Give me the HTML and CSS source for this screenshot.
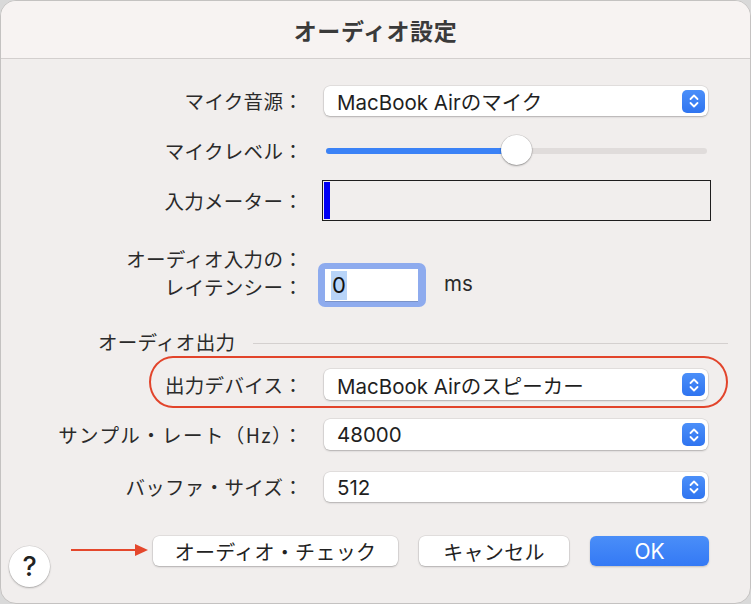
FILE: index.html
```html
<!DOCTYPE html>
<html lang="ja">
<head>
<meta charset="utf-8">
<title>オーディオ設定</title>
<link rel="stylesheet" href="styles.css">
</head>
<body>
<div class="dialog">
  <div class="titlebar">オーディオ設定</div>
  <div class="content">
    <div class="row row-mic">
      <div class="label">マイク音源：</div>
      <div class="select"><span class="select-text">MacBook Airのマイク</span><span class="stepper"><svg width="12" height="16" viewBox="0 0 12 16"><path d="M2.5 6 L6 2.5 L9.5 6 M2.5 10 L6 13.5 L9.5 10" fill="none" stroke="#fff" stroke-width="1.8" stroke-linecap="round" stroke-linejoin="round"/></svg></span></div>
    </div>
    <div class="row row-level">
      <div class="label">マイクレベル：</div>
      <div class="slider"><div class="track"><div class="fill" style="width:50%"></div></div><div class="knob" style="left:50%"></div></div>
    </div>
    <div class="row row-meter">
      <div class="label">入力メーター：</div>
      <div class="meter"><div class="meter-bar"></div></div>
    </div>
    <div class="row row-latency">
      <div class="label label-2">オーディオ入力の：<br>レイテンシー：</div>
      <div class="latency">
        <div class="focus-ring"><div class="input"><span class="sel">0</span></div></div>
        <span class="unit">ms</span>
      </div>
    </div>
    <div class="section">
      <span class="section-title">オーディオ出力</span>
      <span class="section-line"></span>
    </div>
    <div class="row row-out">
      <div class="label">出力デバイス：</div>
      <div class="select"><span class="select-text">MacBook Airのスピーカー</span><span class="stepper"><svg width="12" height="16" viewBox="0 0 12 16"><path d="M2.5 6 L6 2.5 L9.5 6 M2.5 10 L6 13.5 L9.5 10" fill="none" stroke="#fff" stroke-width="1.8" stroke-linecap="round" stroke-linejoin="round"/></svg></span></div>
      <div class="annotation"></div>
    </div>
    <div class="row row-rate">
      <div class="label label-wide">サンプル・レート（Hz）：</div>
      <div class="select"><span class="select-text">48000</span><span class="stepper"><svg width="12" height="16" viewBox="0 0 12 16"><path d="M2.5 6 L6 2.5 L9.5 6 M2.5 10 L6 13.5 L9.5 10" fill="none" stroke="#fff" stroke-width="1.8" stroke-linecap="round" stroke-linejoin="round"/></svg></span></div>
    </div>
    <div class="row row-buf">
      <div class="label">バッファ・サイズ：</div>
      <div class="select"><span class="select-text">512</span><span class="stepper"><svg width="12" height="16" viewBox="0 0 12 16"><path d="M2.5 6 L6 2.5 L9.5 6 M2.5 10 L6 13.5 L9.5 10" fill="none" stroke="#fff" stroke-width="1.8" stroke-linecap="round" stroke-linejoin="round"/></svg></span></div>
    </div>
    <div class="footer">
      <div class="help">?</div>
      <svg class="arrow" width="78" height="14" viewBox="0 0 78 14"><path d="M0 7 L66 7" stroke="#e4472c" stroke-width="2.2"/><path d="M64 1 L77 7 L64 13 Z" fill="#e4472c"/></svg>
      <div class="btn btn-check">オーディオ・チェック</div>
      <div class="btn btn-cancel">キャンセル</div>
      <div class="btn btn-ok">OK</div>
    </div>
  </div>
</div>
</body>
</html>
```
FILE: styles.css
```css
html, body {
  margin: 0;
  padding: 0;
  background: #d9d9d9;
}
body {
  width: 751px;
  height: 604px;
  overflow: hidden;
  font-family: "Inter", "Noto Sans CJK JP", sans-serif;
  color: #262626;
}
.dialog {
  box-sizing: border-box;
  width: 751px;
  height: 604px;
  border: 1px solid #c4c2c1;
  border-radius: 16px;
  background: #f1eeed;
  overflow: hidden;
  display: flex;
  flex-direction: column;
}
.titlebar {
  height: 56px;
  flex: none;
  background: #f7f3f2;
  border-bottom: 1px solid #d3cfce;
  display: flex;
  align-items: center;
  justify-content: center;
  font-family: "Noto Sans CJK JP", sans-serif;
  font-weight: 700;
  font-size: 23px;
  color: #3a3a3a;
  letter-spacing: 0.6px;
  padding-top: 1px;
}
.content {
  flex: 1;
  display: flex;
  flex-direction: column;
  position: relative;
}
.row {
  display: flex;
  align-items: center;
  position: relative;
}
.label {
  width: 302px;
  flex: none;
  text-align: right;
  font-family: "Noto Sans CJK JP", sans-serif;
  font-size: 19.5px;
  letter-spacing: 0.3px;
  line-height: 28px;
  color: #2a2a2a;
}
.label-wide {
  letter-spacing: 1.4px;
  width: 303px;
  margin-right: -1px;
}
.row-mic { margin-top: 27px; height: 30px; }
.row-level { margin-top: 20px; height: 30px; }
.row-meter { margin-top: 14px; height: 41px; }
.row-latency { margin-top: 24px; height: 62px; align-items: flex-start; }
.row-out { margin-top: 16px; height: 31px; }
.row-rate { margin-top: 19px; height: 31px; }
.row-buf { margin-top: 22px; height: 30px; }

.select {
  margin-left: 21px;
  width: 384px;
  height: 100%;
  box-sizing: border-box;
  background: #fff;
  border-radius: 6px;
  box-shadow: 0 0 0 0.5px rgba(0,0,0,0.12), 0 1px 2px rgba(0,0,0,0.22);
  display: flex;
  align-items: center;
  justify-content: space-between;
  padding: 0 3px 0 13px;
}
.select-text {
  font-size: 20.5px;
  color: #1f1f1f;
}
.stepper {
  width: 23px;
  height: 23px;
  border-radius: 5px;
  background: linear-gradient(#4b8ff9, #2f74f0);
  display: flex;
  align-items: center;
  justify-content: center;
}

.slider {
  margin-left: 23px;
  width: 381px;
  height: 30px;
  position: relative;
  display: flex;
  align-items: center;
}
.track {
  width: 100%;
  height: 6px;
  border-radius: 3px;
  background: #e0dcdb;
  overflow: hidden;
  margin-top: -1px;
}
.fill {
  height: 100%;
  background: #3b82f6;
}
.knob {
  position: absolute;
  top: -1px;
  width: 31px;
  height: 30px;
  margin-left: -16px;
  border-radius: 50%;
  background: #fff;
  box-shadow: 0 0 0 0.5px rgba(0,0,0,0.15), 0 1px 2px rgba(0,0,0,0.3);
}

.meter {
  margin-left: 19px;
  width: 389px;
  height: 41px;
  box-sizing: border-box;
  border: 1px solid #1e1e1e;
  padding: 1px;
}
.meter-bar {
  width: 6px;
  height: 100%;
  background: #0000f5;
}

.latency {
  display: flex;
  align-items: center;
  margin-left: 15px;
  margin-top: 18px;
}
.focus-ring {
  box-sizing: border-box;
  width: 108px;
  height: 44px;
  border-radius: 7px;
  background: #8eabee;
  padding: 6px 8px 5px 7px;
}
.input {
  box-sizing: border-box;
  height: 100%;
  background: #fff;
  border-bottom: 1px solid #7a92c8;
  display: flex;
  align-items: center;
  padding-left: 6px;
}
.sel {
  background: #b8d4f8;
  font-size: 22px;
  line-height: 29px;
  color: #111;
  padding: 0 1px;
}
.unit {
  margin-left: 18px;
  font-size: 20.5px;
  color: #2a2a2a;
  margin-top: -3px;
}

.section {
  margin-top: 22px;
  height: 24px;
  display: flex;
  align-items: center;
  padding-left: 97px;
}
.section-title {
  font-family: "Noto Sans CJK JP", sans-serif;
  font-size: 19.5px;
  letter-spacing: 0.3px;
  color: #2a2a2a;
}
.section-line {
  flex: 1;
  height: 1px;
  background: #d4d0cf;
  margin-left: 18px;
  margin-right: 22px;
  margin-top: 5px;
}

.annotation {
  position: absolute;
  left: 148px;
  top: -13px;
  width: 579px;
  height: 52px;
  box-sizing: border-box;
  border: 2px solid #e2442b;
  border-radius: 24px / 26px;
  pointer-events: none;
}

.footer {
  margin-top: 34px;
  height: 30px;
  display: flex;
  align-items: center;
  position: relative;
  padding-left: 152px;
  gap: 21px;
}
.help {
  position: absolute;
  left: 8px;
  top: 10px;
  width: 41px;
  height: 41px;
  border-radius: 50%;
  background: #fff;
  box-shadow: 0 0 0 0.5px rgba(0,0,0,0.12), 0 1px 2px rgba(0,0,0,0.25);
  display: flex;
  align-items: center;
  justify-content: center;
  font-family: "Inter", sans-serif;
  font-size: 27px;
  font-weight: 500;
  color: #222;
}
.arrow {
  position: absolute;
  left: 70px;
  top: 7px;
}
.btn {
  height: 30px;
  box-sizing: border-box;
  border-radius: 6px;
  background: #fff;
  box-shadow: 0 0 0 0.5px rgba(0,0,0,0.12), 0 1px 2px rgba(0,0,0,0.22);
  display: flex;
  align-items: center;
  justify-content: center;
  font-family: "Noto Sans CJK JP", sans-serif;
  font-size: 20px;
  letter-spacing: 0.3px;
  color: #222;
}
.btn-check { width: 245px; }
.btn-cancel { width: 150px; }
.btn-ok {
  width: 119px;
  background: linear-gradient(#4a8ef8, #3479f5);
  color: #fff;
  font-family: "Inter", sans-serif;
  font-size: 21px;
  letter-spacing: 0;
  box-shadow: 0 1px 2px rgba(0,0,0,0.2);
}
```
